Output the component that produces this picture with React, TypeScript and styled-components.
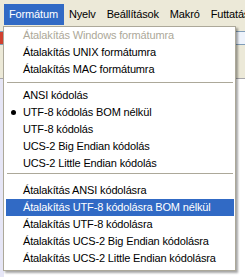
import React from "react";
import styled, { createGlobalStyle } from "styled-components";

const GlobalStyle = createGlobalStyle`
  html, body { margin: 0; padding: 0; background: #ffffff; }
  body { font-family: Tahoma, "Liberation Sans", Arial, sans-serif; }
`;

const Window = styled.div`
  position: relative;
  width: 245px;
  height: 277px;
  overflow: hidden;
  background: #ffffff;
  display: flex;
  flex-direction: column;
`;

const MenuBar = styled.div`
  height: 26px;
  display: flex;
  align-items: flex-start;
  padding: 4px 0 0 4px;
  box-sizing: border-box;
  background: #ece9d8;
  flex: none;
`;

const BarItem = styled.div<{ $active?: boolean }>`
  height: 21px;
  line-height: 21px;
  padding: 0 6px 0 5px;
  font-size: 11px;
  letter-spacing: -0.15px;
  white-space: nowrap;
  color: ${(p) => (p.$active ? "#ffffff" : "#000000")};
  background: ${(p) => (p.$active ? "#316ac5" : "transparent")};
`;

const Toolbar = styled.div`
  height: 53px;
  flex: none;
  background: #ece9d8;
  border-bottom: 1px solid #a7a6aa;
  display: flex;
  justify-content: space-between;
  align-items: flex-start;
  padding-top: 5px;
  box-sizing: border-box;
`;

const ToolIcon = styled.div<{ $color: string }>`
  width: 12px;
  height: 12px;
  margin: 0 -4px;
  border: 1px solid #7f9db9;
  background: ${(p) => p.$color};
`;

const Editor = styled.div`
  flex: 1;
  background: #ffffff;
  border-left: 4px solid #e6e6f6;
`;

const Dropdown = styled.div`
  position: absolute;
  left: 3px;
  top: 26px;
  width: 233px;
  box-sizing: border-box;
  background: #ffffff;
  border: 1px solid #aca899;
  box-shadow: 2px 2px 2px rgba(0, 0, 0, 0.35);
  padding: 0 1px 3px 2px;
  display: flex;
  flex-direction: column;
`;

const Item = styled.div<{ $disabled?: boolean; $active?: boolean }>`
  position: relative;
  height: 17px;
  line-height: 17px;
  padding-left: 17px;
  font-size: 11px;
  letter-spacing: -0.15px;
  white-space: nowrap;
  color: ${(p) => (p.$active ? "#ffffff" : p.$disabled ? "#aca899" : "#000000")};
  background: ${(p) => (p.$active ? "#316ac5" : "transparent")};
`;

const Bullet = styled.span`
  position: absolute;
  left: 5px;
  top: 6px;
  width: 5px;
  height: 5px;
  border-radius: 50%;
  background: #000000;
`;

const Separator = styled.div<{ $height: number; $offset: number }>`
  height: ${(p) => p.$height}px;
  display: flex;
  flex-direction: column;
  padding: ${(p) => p.$offset}px 1px 0 1px;
  box-sizing: border-box;
  &::before {
    content: "";
    display: block;
    height: 1px;
    background: #aca899;
  }
`;

export default function App() {
  return (
    <>
      <GlobalStyle />
      <Window>
        <MenuBar>
          <BarItem $active>Formátum</BarItem>
          <BarItem>Nyelv</BarItem>
          <BarItem>Beállítások</BarItem>
          <BarItem>Makró</BarItem>
          <BarItem>Futtatás</BarItem>
        </MenuBar>
        <Toolbar>
          <ToolIcon $color="#d04030" />
          <ToolIcon $color="#eef3fb" />
        </Toolbar>
        <Editor />
        <Dropdown>
          <Item $disabled>Átalakítás Windows formátumra</Item>
          <Item>Átalakítás UNIX formátumra</Item>
          <Item>Átalakítás MAC formátumra</Item>
          <Separator $height={9} $offset={4} />
          <Item>ANSI kódolás</Item>
          <Item>
            <Bullet />
            UTF-8 kódolás BOM nélkül
          </Item>
          <Item>UTF-8 kódolás</Item>
          <Item>UCS-2 Big Endian kódolás</Item>
          <Item>UCS-2 Little Endian kódolás</Item>
          <Separator $height={10} $offset={1} />
          <Item>Átalakítás ANSI kódolásra</Item>
          <Item $active>Átalakítás UTF-8 kódolásra BOM nélkül</Item>
          <Item>Átalakítás UTF-8 kódolásra</Item>
          <Item>Átalakítás UCS-2 Big Endian kódolásra</Item>
          <Item>Átalakítás UCS-2 Little Endian kódolásra</Item>
        </Dropdown>
      </Window>
    </>
  );
}
